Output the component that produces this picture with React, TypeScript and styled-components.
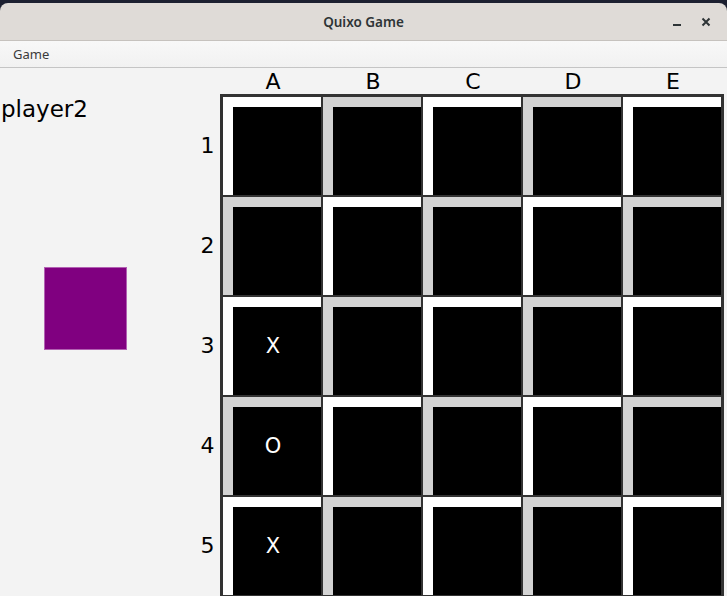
import React from "react";
import styled, { createGlobalStyle } from "styled-components";

const Global = createGlobalStyle`
  html, body { margin: 0; padding: 0; background: #1c2030; overflow: hidden; }
  #root { width: 727px; height: 596px; }
`;

const Window = styled.div`
  width: 727px;
  height: 596px;
  display: flex;
  flex-direction: column;
  overflow: hidden;
  background: #1c2030;
  padding-top: 3px;
  box-sizing: border-box;
`;

const TitleBar = styled.div`
  height: 37px;
  flex: none;
  background: #dfdbd7;
  border-radius: 8px 8px 0 0;
  position: relative;
  display: flex;
  align-items: center;
  justify-content: center;
  font-family: "Noto Sans", "DejaVu Sans", sans-serif;
  font-weight: 600;
  font-size: 13.5px;
  color: #2e3436;
  border-bottom: 1px solid #c6c2be;
`;

const Controls = styled.div`
  position: absolute;
  right: 14px;
  top: 0;
  height: 100%;
  display: flex;
  align-items: center;
  gap: 14px;
`;

const CtrlIcon = styled.svg`
  width: 14px;
  height: 14px;
  display: block;
`;

const MenuBar = styled.div`
  height: 26px;
  flex: none;
  background: linear-gradient(#f8f8f8, #f1f1f1);
  border-bottom: 1px solid #c4c4c4;
  display: flex;
  align-items: center;
  padding-left: 13px;
  font-family: "Noto Sans", "DejaVu Sans", sans-serif;
  font-size: 13px;
  color: #3a3a3a;
`;

const Content = styled.div`
  flex: 1;
  background: #f3f3f3;
  display: flex;
  flex-direction: row;
  overflow: hidden;
  font-family: "DejaVu Sans", sans-serif;
`;

const SidePanel = styled.div`
  width: 195px;
  flex: none;
  display: flex;
  flex-direction: column;
`;

const PlayerName = styled.div`
  font-size: 23px;
  color: #000;
  margin-top: 28px;
  margin-left: 1px;
  line-height: 27px;
`;

const TurnSwatch = styled.div<{ $color: string }>`
  width: 83px;
  height: 83px;
  box-sizing: border-box;
  background: ${(p) => p.$color};
  border: 1px solid #b260b2;
  margin-top: 144px;
  margin-left: 44px;
`;

const BoardArea = styled.div`
  display: grid;
  grid-template-columns: 25px auto;
  grid-template-rows: 26px auto;
`;

const ColLabels = styled.div`
  grid-column: 2;
  display: grid;
  grid-template-columns: repeat(5, 98px);
  column-gap: 2px;
  padding-left: 4px;
`;

const RowLabels = styled.div`
  grid-column: 1;
  grid-row: 2;
  display: grid;
  grid-template-rows: repeat(5, 98px);
  row-gap: 2px;
  padding-top: 3px;
`;

const Label = styled.div`
  font-size: 22px;
  color: #000;
  display: flex;
  align-items: center;
  justify-content: center;
  line-height: 1;
`;

const ColLabel = styled(Label)`
  align-items: flex-end;
  padding-bottom: 1px;
`;

const Board = styled.div`
  grid-column: 2;
  grid-row: 2;
  display: grid;
  grid-template-columns: repeat(5, 98px);
  grid-template-rows: repeat(5, 98px);
  gap: 2px;
  border: 3px solid #333333;
  background: #333333;
`;

const CellBox = styled.div<{ $edge: string }>`
  position: relative;
  background: #000;
  box-shadow: inset 10px 10px 0 0 ${(p) => p.$edge};
  display: flex;
  align-items: center;
  justify-content: center;
  padding-left: 2px;
`;

const Mark = styled.span`
  color: #fff;
  font-family: "DejaVu Sans", sans-serif;
  font-size: 21px;
`;

const cols = ["A", "B", "C", "D", "E"];
const rows = [1, 2, 3, 4, 5];
const marks: Record<string, string> = { "0-2": "X", "0-3": "O", "0-4": "X" };

export default function App() {
  return (
    <>
      <Global />
      <Window>
        <TitleBar>
          Quixo Game
          <Controls>
            <CtrlIcon viewBox="0 0 14 14">
              <rect x="2" y="9" width="8" height="2" fill="#2e3436" />
            </CtrlIcon>
            <CtrlIcon viewBox="0 0 14 14">
              <path d="M3.5 3.5 L10.5 10.5 M10.5 3.5 L3.5 10.5" stroke="#2e3436" strokeWidth="2" />
            </CtrlIcon>
          </Controls>
        </TitleBar>
        <MenuBar>Game</MenuBar>
        <Content>
          <SidePanel>
            <PlayerName>player2</PlayerName>
            <TurnSwatch $color="#800080" />
          </SidePanel>
          <BoardArea>
            <ColLabels>
              {cols.map((c) => (
                <ColLabel key={c}>{c}</ColLabel>
              ))}
            </ColLabels>
            <RowLabels>
              {rows.map((r) => (
                <Label key={r}>{r}</Label>
              ))}
            </RowLabels>
            <Board>
              {rows.map((r, ri) =>
                cols.map((c, ci) => (
                  <CellBox key={c + r} $edge={(ri + ci) % 2 === 0 ? "#ffffff" : "#d3d3d3"}>
                    {marks[`${ci}-${ri}`] && <Mark>{marks[`${ci}-${ri}`]}</Mark>}
                  </CellBox>
                ))
              )}
            </Board>
          </BoardArea>
        </Content>
      </Window>
    </>
  );
}
